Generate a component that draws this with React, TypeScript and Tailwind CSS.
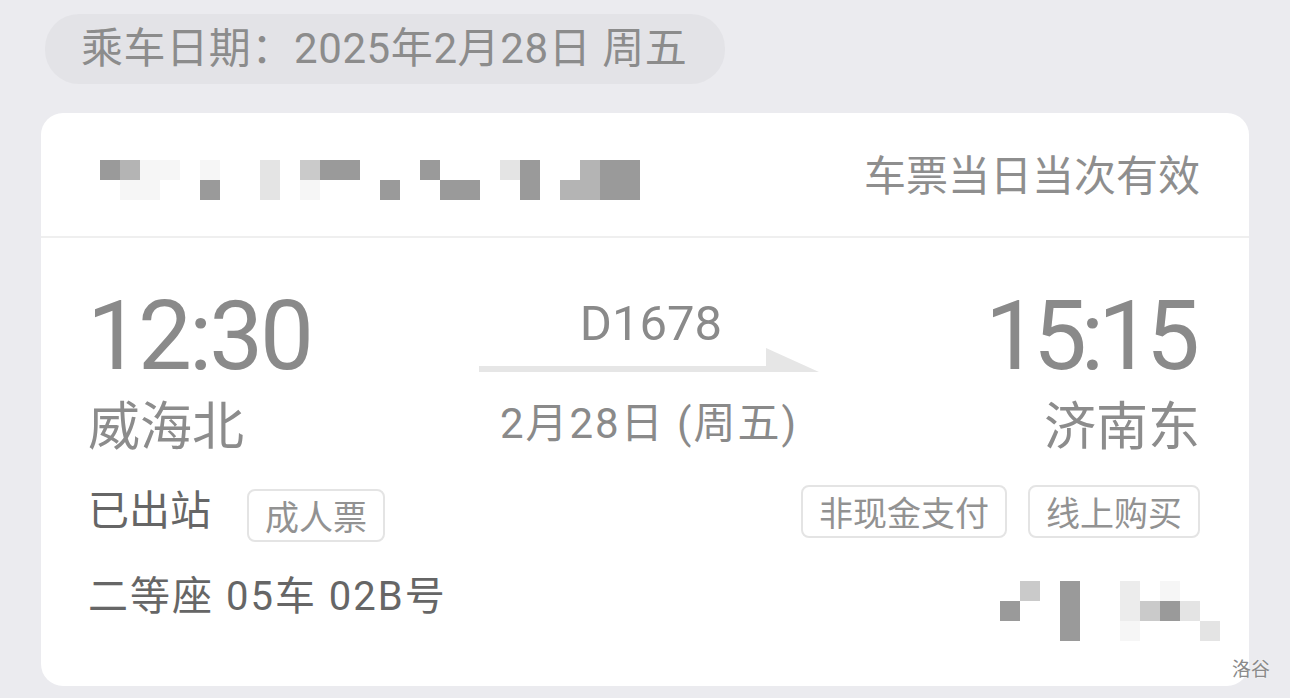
import React from 'react';

const CJK = '"Noto Sans CJK SC", "Noto Sans", sans-serif';
const NUM = 'Roboto, "Noto Sans CJK SC", sans-serif';

const SHADES: Record<string, string> = {
  '.': 'bg-transparent',
  d: 'bg-[#9a9a9a]',
  m: 'bg-[#b4b4b4]',
  l: 'bg-[#cacaca]',
  e: 'bg-[#e4e4e4]',
  g: 'bg-[#ececec]',
  f: 'bg-[#f6f6f6]',
};

// pixelated (redacted) blocks, 20px cells
const topMosaic = ['dmff.f..e.ldd...d...ed..mdd', '.ff..d..e.f...d..dd..d.mmdd'];
const bottomMosaic = ['.l.d..g.f..', 'd..d..glde.', '...d..f...e'];

const Mosaic = ({ rows }: { rows: string[] }) => (
  <div className="flex flex-col">
    {rows.map((row, r) => (
      <div key={r} className="flex">
        {row.split('').map((c, i) => (
          <div key={i} className={`w-[20px] h-[20px] ${SHADES[c]}`} />
        ))}
      </div>
    ))}
  </div>
);

const Tag = ({ label }: { label: string }) => (
  <div className="h-[53px] px-[16px] flex items-center border-2 border-[#e4e4e4] rounded-[8px] text-[34px] leading-none text-[#929292]">
    {label}
  </div>
);

const Arrow = () => (
  <svg width="340" height="25" viewBox="0 0 340 25" className="block">
    <rect x="0" y="18" width="290" height="6" fill="#e6e6e6" />
    <polygon points="287,0 287,24 340,24" fill="#e6e6e6" />
  </svg>
);

export default function App() {
  return (
    <div
      className="relative w-[1290px] h-[698px] overflow-hidden bg-[#ebebef] pt-[14px]"
      style={{ fontFamily: CJK }}
    >
      {/* date pill */}
      <div
        className="ml-[45px] w-[680px] h-[70px] rounded-[34px] bg-[#e3e3e7] flex items-center pl-[36px] text-[42px] leading-none tracking-[0.6px] text-[#8c8c8c]"
        style={{ fontFamily: NUM }}
      >
        乘车日期：2025年2月28日 周五
      </div>

      {/* ticket card */}
      <div className="mt-[29px] ml-[41px] w-[1208px] h-[573px] bg-white rounded-[22px] flex flex-col">
        <div className="h-[123px] flex items-start justify-between pl-[59px] pr-[49px]">
          <div className="mt-[47px]">
            <Mosaic rows={topMosaic} />
          </div>
          <div className="mt-[39px] text-[42px] leading-none text-[#8e8e8e]">车票当日当次有效</div>
        </div>
        <div className="h-[2px] bg-[#efefef]" />

        <div className="flex flex-col pl-[47px] pr-[49px]">
          <div className="mt-[50px] grid grid-cols-[391px_340px_1fr]">
            <div className="flex flex-col items-start">
              <div
                className="text-[96px] leading-none text-[#8a8a8a] tracking-[-3px] -ml-[1px]"
                style={{ fontFamily: NUM }}
              >
                12:30
              </div>
              <div className="mt-[13px] text-[52px] leading-none text-[#8c8c8c]">威海北</div>
            </div>
            <div className="flex flex-col items-center">
              <div className="mt-[11px] text-[49px] leading-none text-[#8a8a8a] ml-[4px]" style={{ fontFamily: NUM }}>
                D1678
              </div>
              <div className="self-stretch">
                <Arrow />
              </div>
              <div
                className="mt-[30px] text-[42px] leading-none tracking-[2px] text-[#8a8a8a]"
                style={{ fontFamily: NUM }}
              >
                2月28日 (周五)
              </div>
            </div>
            <div className="flex flex-col items-end">
              <div
                className="text-[96px] leading-none text-[#8a8a8a] tracking-[-6px] mr-[6px]"
                style={{ fontFamily: NUM }}
              >
                15:15
              </div>
              <div className="mt-[13px] text-[52px] leading-none text-[#8c8c8c]">济南东</div>
            </div>
          </div>

          <div className="mt-[36px] flex items-start justify-between">
            <div className="flex items-start">
              <div className="mt-[2px] text-[41px] leading-none text-[#666666]">已出站</div>
              <div className="ml-[36px] mt-[4px]">
                <Tag label="成人票" />
              </div>
            </div>
            <div className="flex items-start gap-[21px]">
              <Tag label="非现金支付" />
              <Tag label="线上购买" />
            </div>
          </div>

          <div className="mt-[35px] flex items-start justify-between">
            <div className="text-[40px] leading-none tracking-[2px] text-[#666666]" style={{ fontFamily: NUM }}>
              二等座 05车 02B号
            </div>
            <div className="mt-[4px] -mr-[20px]">
              <Mosaic rows={bottomMosaic} />
            </div>
          </div>
        </div>
      </div>

      {/* watermark */}
      <div className="absolute left-[1232px] top-[658px] text-[19px] leading-none text-[#8a8a8a] [text-shadow:0_0_2px_#ffffff]">
        洛谷
      </div>
    </div>
  );
}
